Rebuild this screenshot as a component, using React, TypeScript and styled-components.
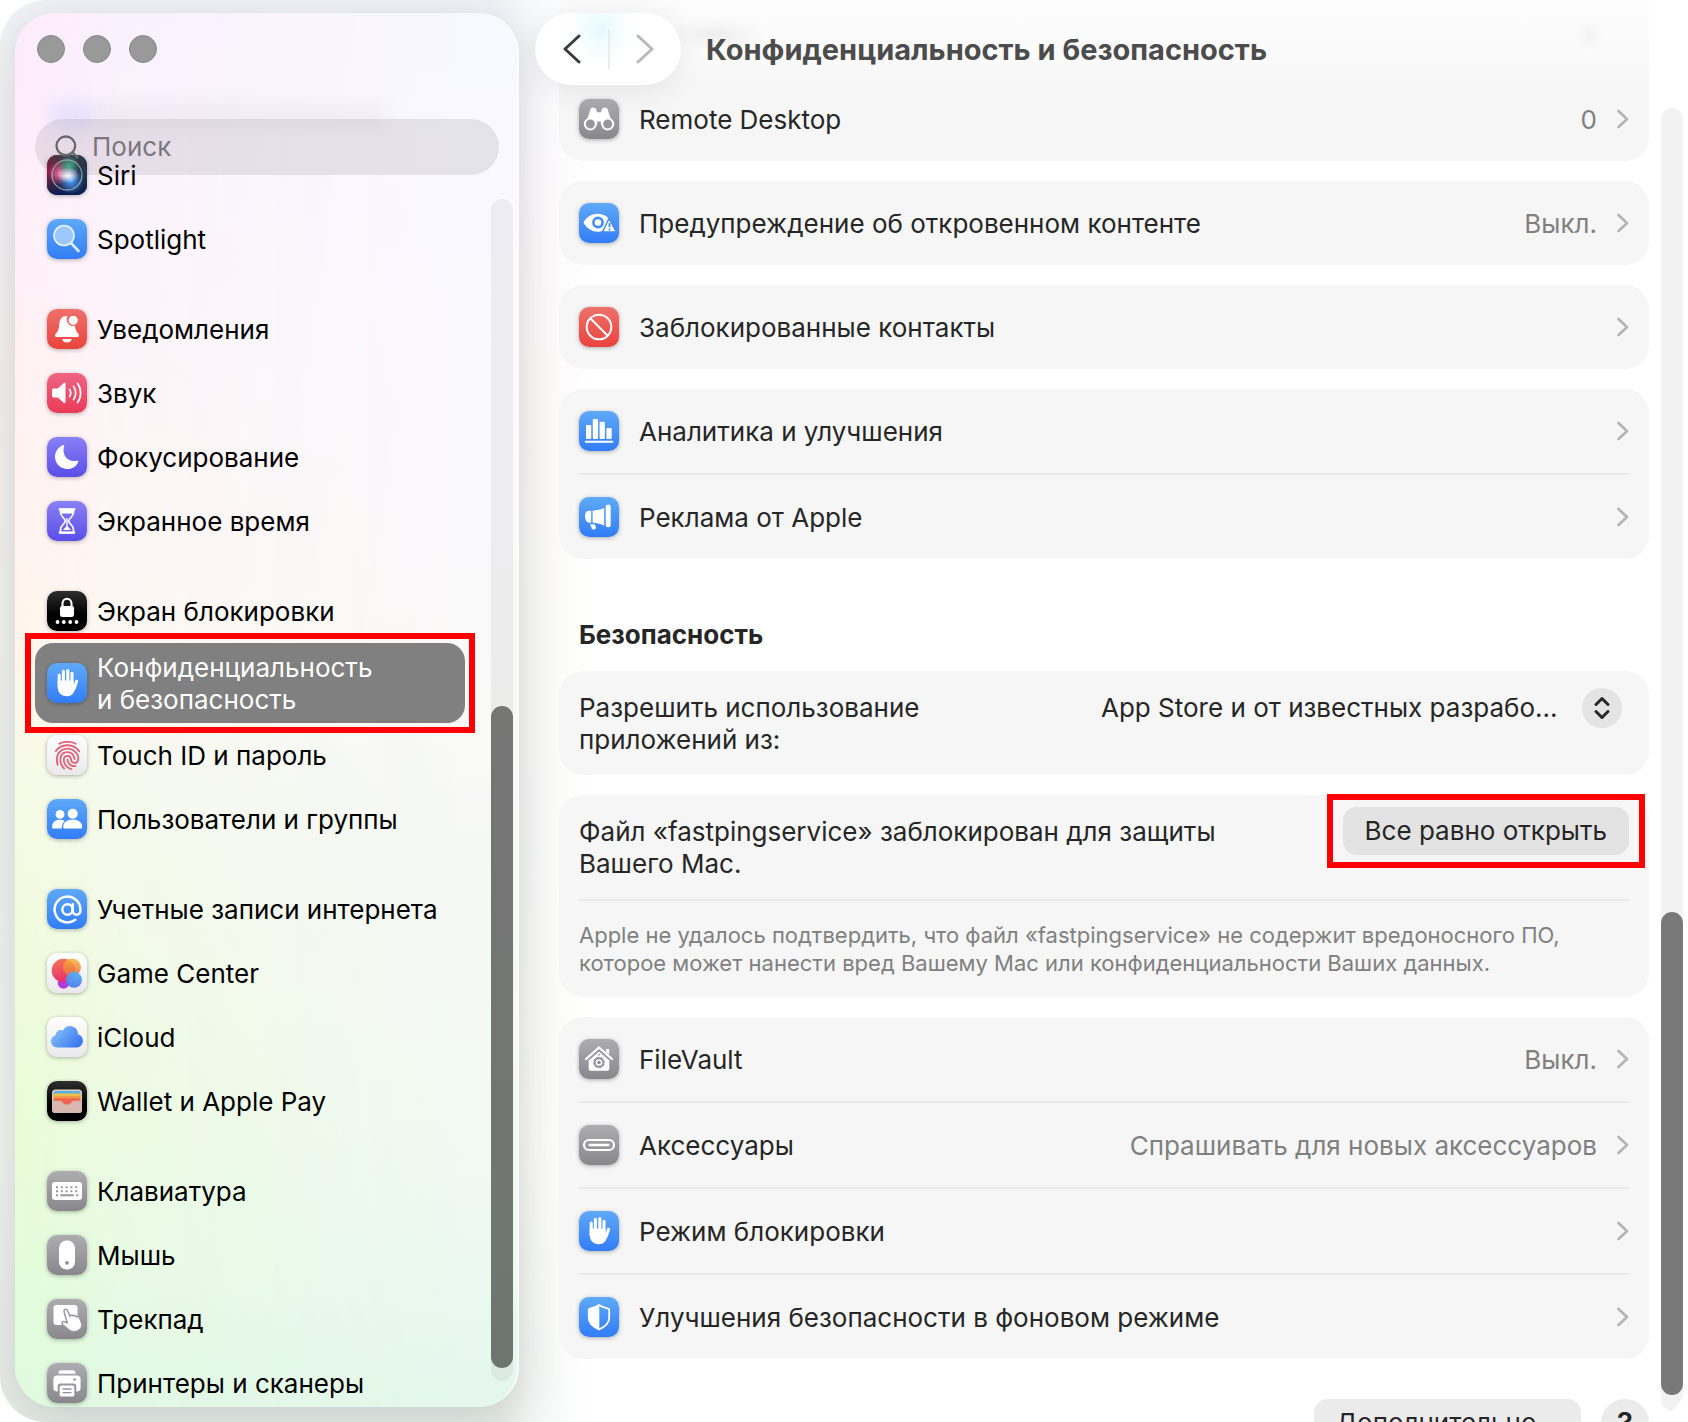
import React from "react";
import styled, { createGlobalStyle, css } from "styled-components";
import { AtSign, Search } from "lucide-react";
import { IoFingerPrint } from "react-icons/io5";

const GlobalStyle = createGlobalStyle`
  *, *::before, *::after { box-sizing: border-box; }
  body {
    margin: 0;
    background: #ffffff;
    color: #262626;
    font-family: Inter, "Noto Sans", "Liberation Sans", sans-serif;
    font-size: 26px;
    line-height: 32px;
    -webkit-font-smoothing: antialiased;
  }
  h1, h2, p, ul { margin: 0; padding: 0; }
  ul { list-style: none; }
  a { color: inherit; text-decoration: none; }
  button, input, select { font: inherit; color: inherit; border: 0; padding: 0; background: none; }
`;

/* ---------- window ---------- */

const Window = styled.div`
  position: relative;
  display: flex;
  height: 100vh;
  overflow: hidden;
  border-radius: 46px;
  background: #ffffff;

  &::before {
    content: "";
    position: absolute;
    inset: 0 auto 0 0;
    width: 590px;
    background: linear-gradient(
      #f2f4f9 0%,
      #f6f2f6 12%,
      #f6f0ef 26%,
      #f3f2ef 40%,
      #f0f2ef 60%,
      #f4f4ef 80%,
      #e6ece8 100%
    );
    mask-image: linear-gradient(to right, #000 0 500px, rgba(0, 0, 0, 0.5) 530px, transparent 590px);
  }
`;

/* ---------- sidebar ---------- */

const Sidebar = styled.aside`
  position: relative;
  flex: 0 0 504px;
  min-width: 0;
  display: flex;
  flex-direction: column;
  margin: 13px 0 15px 15px;
  border-radius: 40px;
  border-right: 2px solid rgba(255, 255, 255, 0.7);
  background: linear-gradient(#f8f8ff 0%, #faf9fe 25%, #faf9f9 45%, #f6f8f6 62%, #f2f9f3 78%, #ecf9f0 90%, #e4f7ec 100%);
  box-shadow: 0 8px 44px rgba(30, 40, 50, 0.17);
  color: #000000;

  &::before {
    content: "";
    position: absolute;
    inset: 0;
    border-radius: inherit;
    background: linear-gradient(#fdeafd 0%, #feeefb 12%, #fff0f3 24%, #fff5ec 44%, #f5fae6 55%, #effbdc 66%, #e8fcd6 80%, #dffadd 100%);
    mask-image: linear-gradient(to right, #000 0%, rgba(0, 0, 0, 0.55) 20%, rgba(0, 0, 0, 0.3) 50%, transparent 90%);
  }
`;

const TrafficLights = styled.div`
  position: relative;
  display: flex;
  gap: 18px;
  padding: 22px 22px 56px;
`;

const Light = styled.button`
  width: 28px;
  height: 28px;
  border-radius: 50%;
  border: 1px solid #868686;
  background: #999999;
`;

const SearchField = styled.label`
  position: relative;
  z-index: 1;
  display: flex;
  align-items: center;
  gap: 11px;
  height: 56px;
  margin: 0 18px 0 20px;
  padding: 0 18px;
  border-radius: 28px;
  background: rgba(60, 55, 65, 0.11);
  color: #6b686d;

  &::before {
    content: "";
    position: absolute;
    left: 14px;
    top: -16px;
    width: 340px;
    height: 24px;
    border-radius: 12px;
    background: linear-gradient(to right, rgba(90, 120, 255, 0.14) 0 36px, rgba(0, 0, 0, 0.04) 50px);
    filter: blur(9px);
  }

  input {
    flex: 1;
    width: 100%;
    min-width: 0;
    outline: none;
  }
  input::placeholder {
    color: #7b787d;
    opacity: 1;
  }
`;

const SidebarBody = styled.div`
  position: relative;
  flex: 1;
  min-height: 0;
  display: flex;
  margin-top: -32px;
`;

const NavList = styled.nav`
  flex: 1;
  min-width: 0;
  padding: 0 26px 0 20px;
`;

const NavGroup = styled.ul`
  & + & {
    margin-top: 26px;
  }
`;

const NavLink = styled.a<{ $selected?: boolean }>`
  position: relative;
  display: flex;
  align-items: center;
  gap: 10px;
  min-height: 64px;
  padding: 7px 12px;
  border-radius: 18px;
  ${(p) =>
    p.$selected &&
    css`
      background: #808080;
      color: #ffffff;
    `}
`;

const NavText = styled.span`
  padding-top: 2px;
  white-space: pre;
`;

const Highlight = styled.span<{ $x: number; $y: number }>`
  position: absolute;
  inset: ${(p) => -p.$y}px ${(p) => -p.$x}px;
  border: 6px solid #ff0000;
  pointer-events: none;
`;

const Track = styled.div<{ $margin: string; $end: number }>`
  flex: 0 0 22px;
  display: flex;
  flex-direction: column;
  justify-content: flex-end;
  margin: ${(p) => p.$margin};
  padding-bottom: ${(p) => p.$end}px;
  border-radius: 11px;
  background: rgba(0, 0, 0, 0.05);
`;

const Thumb = styled.div<{ $size: number }>`
  height: ${(p) => p.$size}%;
  border-radius: 11px;
  background: rgba(0, 0, 0, 0.5);
`;

/* ---------- icon tiles ---------- */

const tones = {
  blue: "linear-gradient(#5fa9f8, #327df7)",
  red: "linear-gradient(#ee716a, #ea433d)",
  pink: "linear-gradient(#ee6583, #ea3b58)",
  purple: "linear-gradient(#8a80f6, #5a4ee8)",
  gray: "linear-gradient(#adadb0, #88888c)",
  black: "linear-gradient(#2e2e2e, #000000 60%)",
  white: "linear-gradient(#ffffff, #e9e9eb)",
};
type Tone = keyof typeof tones;

const Tile = styled.span<{ $tone: Tone }>`
  flex: none;
  width: 40px;
  height: 40px;
  display: grid;
  place-items: center;
  border-radius: 10px;
  overflow: hidden;
  background: ${(p) => tones[p.$tone]};
  box-shadow: 0 1px 4px rgba(0, 0, 0, 0.3);

  svg {
    display: block;
  }
`;

const Glyph = ({ children }: { children: React.ReactNode }) => (
  <svg width="40" height="40" viewBox="0 0 40 40" fill="#fff" aria-hidden="true">
    {children}
  </svg>
);

const HandGlyph = () => (
  <Glyph>
    <g stroke="#fff" strokeWidth="3.1" strokeLinecap="round" fill="none">
      <path d="M12.2 12v12M16.4 8.3V20M20.8 7.6V20M25 10.2V22" />
      <path d="M29.6 18.2 27.4 25" strokeWidth="3" />
    </g>
    <path d="M10.7 17.5h15.8v4.2l2.6-1.5c-.6 7-2.6 13-9 13-6.600 0-9.400-4.200-9.400-9.700z" />
  </Glyph>
);

const glyphs: Record<string, React.ReactNode> = {
  siri: (
    <Glyph>
      <defs>
        <linearGradient id="siriBg" x1="0" y1="0.3" x2="1" y2="0.7">
          <stop offset="0" stopColor="#a01c4c" />
          <stop offset="0.5" stopColor="#3a3358" />
          <stop offset="1" stopColor="#123c50" />
        </linearGradient>
        <linearGradient id="siriBottom" x1="0" y1="0" x2="0" y2="1">
          <stop offset="0" stopColor="#2c4a42" stopOpacity="0.7" />
          <stop offset="0.4" stopColor="#222" stopOpacity="0" />
          <stop offset="1" stopColor="#0b1c58" />
        </linearGradient>
        <radialGradient id="siriPink"><stop offset="0" stopColor="#ff7ab0" /><stop offset="1" stopColor="#ff5a90" stopOpacity="0" /></radialGradient>
        <radialGradient id="siriGreen"><stop offset="0" stopColor="#42c294" /><stop offset="1" stopColor="#42c294" stopOpacity="0" /></radialGradient>
        <radialGradient id="siriBlue"><stop offset="0" stopColor="#4aa8ff" /><stop offset="1" stopColor="#4a90ff" stopOpacity="0" /></radialGradient>
        <radialGradient id="siriCore"><stop offset="0" stopColor="#fff" /><stop offset="0.3" stopColor="#fff" stopOpacity="0.8" /><stop offset="1" stopColor="#fff" stopOpacity="0" /></radialGradient>
      </defs>
      <rect width="40" height="40" fill="url(#siriBg)" />
      <rect width="40" height="40" fill="url(#siriBottom)" />
      <circle cx="13" cy="18" r="12" fill="url(#siriPink)" />
      <circle cx="22" cy="11" r="11" fill="url(#siriGreen)" />
      <circle cx="24" cy="26" r="13" fill="url(#siriBlue)" />
      <ellipse cx="21" cy="20" rx="11" ry="8" fill="url(#siriCore)" />
      <circle cx="20" cy="20" r="15" fill="none" stroke="#b9d8d4" strokeOpacity="0.65" strokeWidth="1.300" />
    </Glyph>
  ),
  spotlight: (
    <Glyph>
      <path d="m24.500 24.500 7 7.500" stroke="#dcecff" strokeWidth="2.600" strokeLinecap="round" />
      <circle cx="17" cy="16.500" r="10" fill="#9cc8fb" stroke="#e6f3ff" strokeWidth="1.600" />
    </Glyph>
  ),
  bell: (
    <Glyph>
      <path d="M20 7c-5 0-7.500 3.500-7.800 8.200-.3 5-1.200 7-3.700 9.800-1 1.200-.6 3 1.100 3h20.800c1.700 0 2.100-1.800 1.100-3-2.500-2.800-3.300-4.800-3.600-8.500A6.600 6.600 0 0 1 20.500 7z" />
      <circle cx="26.200" cy="11.300" r="5.200" stroke="#ec615a" strokeWidth="1.200" />
      <path d="M15.500 30h9a4.500 3.400 0 0 1-9 0z" />
    </Glyph>
  ),
  sound: (
    <Glyph>
      <path d="M5 17.200c0-1 .6-1.700 1.700-1.700h4.100l5.800-5.300c.8-.7 1.900-.2 1.900.8v18c0 1-1.100 1.500-1.900.8l-5.800-5.300H6.700c-1.100 0-1.700-.7-1.700-1.700z" />
      <g fill="none" stroke="#fff" strokeWidth="1.700" strokeLinecap="round">
        <path d="M22.600 16.500c1.300 2 1.300 5 0 7" />
        <path d="M26.600 13.500c2.700 3.600 2.700 9.400 0 13" />
        <path d="M30.600 10.500c4 5.300 4 13.700 0 19" />
      </g>
    </Glyph>
  ),
  moon: (
    <Glyph>
      <path d="M15.800 8.200c.8-.4 1.600.3 1.300 1.100-2.800 8.700 3.900 16.600 13 14.400.9-.2 1.500.6 1.100 1.400-1.900 4.400-6 7-10.600 7C13.600 32.100 8 26.700 8 19.800c0-5 3.100-9.600 7.800-11.600z" />
    </Glyph>
  ),
  hourglass: (
    <Glyph>
      <path d="M13.500 8.300h13v3.200c0 4.200-4.800 5.800-4.800 8.500s4.800 4.300 4.800 8.500v3.200h-13v-3.200c0-4.200 4.800-5.800 4.800-8.500s-4.800-4.300-4.800-8.500z" fill="none" stroke="#fff" strokeWidth="1.700" strokeLinejoin="round" />
      <path d="M11.800 7.200h16.400v2.300H11.800zM11.800 30.500h16.400v2.300H11.800z" />
      <path d="M19.300 17h1.400v8.500c.8 1.200 2.500 2 3.300 3.500h-8c.8-1.500 2.500-2.300 3.300-3.500z" />
      <path d="M13.800 9h12.400v3.600H13.800z" />
    </Glyph>
  ),
  lock: (
    <Glyph>
      <rect x="13" y="15" width="14" height="11" rx="2.200" />
      <path d="M15.500 16v-3.500a4.500 4.800 0 0 1 9 0V16" fill="none" stroke="#fff" strokeWidth="2.100" />
      <circle cx="10.500" cy="31" r="1.900" /><circle cx="16.800" cy="31" r="1.900" />
      <circle cx="23.200" cy="31" r="1.900" /><circle cx="29.500" cy="31" r="1.900" />
    </Glyph>
  ),
  hand: <HandGlyph />,
  touch: <IoFingerPrint size={31} color="#e0637c" />,
  users: (
    <Glyph>
      <circle cx="13" cy="15.300" r="4.400" />
      <path d="M5 28c0-4.600 3.400-7.300 7.900-7.300 1.900 0 3.500.5 4.800 1.300-1.800 1.700-2.900 4-3 7.500H6.300c-.8 0-1.300-.6-1.300-1.500z" />
      <circle cx="25.700" cy="14.700" r="5" />
      <path d="M16.200 28c0-4.700 4.100-7.500 9.500-7.500s9.500 2.800 9.500 7.500c0 .9-.6 1.500-1.500 1.500h-16c-.9 0-1.500-.6-1.500-1.500z" />
    </Glyph>
  ),
  at: <AtSign size={31} color="#fff" strokeWidth={1.900} />,
  game: (
    <Glyph>
      <defs>
        <linearGradient id="gcRed" x1="0" y1="0" x2="0.2" y2="1"><stop offset="0" stopColor="#f07a50" /><stop offset="1" stopColor="#ec2f70" /></linearGradient>
        <linearGradient id="gcOrange" x1="0.300" y1="0" x2="0.300" y2="1"><stop offset="0" stopColor="#f8b234" /><stop offset="1" stopColor="#f06a48" /></linearGradient>
        <linearGradient id="gcBlue" x1="0" y1="0" x2="0" y2="1"><stop offset="0" stopColor="#49b5f5" /><stop offset="1" stopColor="#4575ee" /></linearGradient>
      </defs>
      <circle cx="16.500" cy="30" r="5.800" fill="#b43be0" />
      <circle cx="16.500" cy="17.500" r="11.800" fill="url(#gcRed)" />
      <circle cx="25" cy="14.500" r="9" fill="url(#gcOrange)" fillOpacity="0.850" />
      <circle cx="27" cy="26.800" r="8" fill="url(#gcBlue)" fillOpacity="0.900" />
    </Glyph>
  ),
  cloud: (
    <Glyph>
      <defs>
        <linearGradient id="cloud" x1="0" y1="0" x2="1" y2="0.600"><stop offset="0" stopColor="#8fccf8" /><stop offset="1" stopColor="#3d79ee" /></linearGradient>
      </defs>
      <path d="M10.600 30.500C7 30.500 4 27.800 4 24.300c0-3.100 2-5.400 4.700-6 .1-3.200 2.200-5.300 4.900-5.300.9 0 1.700.2 2.400.6C17.300 10.400 20.100 9 23 9c4.600 0 8 3.600 8 8.200 3 .8 4.900 3.300 4.900 6.500 0 3.900-3 6.800-6.700 6.800z" fill="url(#cloud)" />
    </Glyph>
  ),
  wallet: (
    <Glyph>
      <rect x="5" y="8.500" width="30" height="23.500" rx="3.500" fill="#d9cfca" />
      <rect x="6.500" y="10" width="27" height="8" rx="2" fill="#5ab0e0" />
      <rect x="6.500" y="12.500" width="27" height="8" rx="1.500" fill="#eebf48" />
      <rect x="6.500" y="15" width="27" height="8" rx="1.500" fill="#f29a45" />
      <rect x="6.500" y="17.300" width="27" height="8" rx="1.500" fill="#ee6650" />
      <path d="M5 19.800h7.500c1.700 0 2.300.7 3.200 1.800 2.400 2.900 6.200 2.900 8.600 0 .9-1.100 1.500-1.800 3.200-1.800H35v8.700a3.500 3.500 0 0 1-3.500 3.500h-23A3.500 3.500 0 0 1 5 28.500z" fill="#d8b7ae" />
    </Glyph>
  ),
  keyboard: (
    <Glyph>
      <rect x="5" y="11" width="30" height="18" rx="3" />
      <g stroke="#97979b" strokeWidth="2" strokeDasharray="2 2.800">
        <path d="M9 16.300h22M9 20.300h22" />
        <path d="M9 24.300h2M29.200 24.300h2" />
      </g>
      <path d="M13.300 24.300h13.500" stroke="#97979b" strokeWidth="2" />
    </Glyph>
  ),
  mouse: (
    <Glyph>
      <rect x="12" y="5.500" width="16" height="29" rx="7.500" />
      <circle cx="20" cy="27.800" r="1.900" fill="#8f8f93" />
    </Glyph>
  ),
  trackpad: (
    <Glyph>
      <rect x="6.500" y="6" width="24" height="20" rx="3" />
      <path d="M17 12.500c-.6-2 2.400-3.200 3.300-1.200l2.700 6 .5-.9c1-.8 2.300-.4 2.800.6 1.200-.8 2.600-.4 3.200.8 1.200-.5 2.500 0 3.100 1.200l1.500 3.400c1.700 4 .2 7.800-3.600 9.500-3.200 1.400-6.300.9-9-1.300l-6-5c-1.400-1.300-.1-3.400 1.800-2.900l2.900 1z" stroke="#99999d" strokeWidth="1.500" />
    </Glyph>
  ),
  printer: (
    <Glyph>
      <path d="M11.500 10c0-1.800 1-2.800 2.800-2.800h11.400c1.800 0 2.800 1 2.800 2.800v.8h-17z" />
      <path d="M10 12.500h20c2.300 0 3.600 1.300 3.600 3.600v9c0 2.200-1.200 3.300-3.300 3.300h-1v-5.500c0-1.600-.9-2.500-2.500-2.500H13.200c-1.600 0-2.500.9-2.500 2.500v5.500h-1c-2.100 0-3.300-1.100-3.300-3.300v-9c0-2.300 1.300-3.600 3.600-3.600z" />
      <circle cx="27.500" cy="16.500" r="1.300" fill="#929296" />
      <rect x="12.700" y="22.500" width="14.600" height="11" rx="1.600" />
      <path d="M15.500 26h9M15.500 29.600h9" stroke="#929296" strokeWidth="1.400" />
    </Glyph>
  ),
  binoculars: (
    <Glyph>
      <path d="M11 11.500c.3-1.700 1.200-3 3-3s3.200 1 3.500 2.800l.4 1.900h4.200l.4-1.900c.3-1.800 1.700-2.800 3.500-2.800s2.700 1.300 3 3l4.500 13.700H21.800v-2.700h-3.600v2.700H6.500z" />
      <g fill="#97979a" stroke="#fff" strokeWidth="2">
        <circle cx="11.300" cy="25" r="5.500" /><circle cx="28.700" cy="25" r="5.500" />
      </g>
    </Glyph>
  ),
  eye: (
    <Glyph>
      <path d="M4.500 19.500C6.500 15 12 10.700 18.700 10.700c5 0 9 2.300 11.800 5.600l-5.700 11.200c-1.900.9-4 1.300-6.100 1.300-6.700 0-12.200-4.800-14.200-9.300z" />
      <circle cx="19" cy="19.500" r="4.600" fill="none" stroke="#428cf7" strokeWidth="2.600" />
      <path d="M30 15.500 37.300 29H23.500z" stroke="#428cf7" strokeWidth="1.500" strokeLinejoin="round" />
      <path d="M30.500 20v4.200M30.500 25.600v1.800" stroke="#3a84f7" strokeWidth="1.700" />
    </Glyph>
  ),
  ban: (
    <Glyph>
      <g fill="none" stroke="#fff" strokeWidth="2">
        <circle cx="20" cy="20" r="12.300" /><path d="m11.300 11.300 17.400 17.400" />
      </g>
    </Glyph>
  ),
  chart: (
    <Glyph>
      <rect x="7" y="14" width="5.300" height="14" rx="1" />
      <rect x="13.800" y="8" width="5.300" height="20" rx="1" />
      <rect x="20.600" y="10.800" width="5.300" height="17.200" rx="1" />
      <rect x="27.400" y="17" width="5.300" height="11" rx="1" />
      <rect x="6" y="29.700" width="28" height="2" rx="0.500" />
    </Glyph>
  ),
  megaphone: (
    <Glyph>
      <path d="M6 19c0-3.500 1.500-5.300 4.500-5.300h1.700v12h-1.700C7.500 25.700 6 22.500 6 19z" />
      <path d="M13.600 13.700c4.500-.2 8.300-1 11.600-2.600v17.600c-3.300-1.700-7.100-2.700-11.600-3z" />
      <rect x="26.700" y="7.500" width="5" height="22.800" rx="2.500" />
      <path d="M11 27.300c1.600-.2 3.400 0 5 .3l.8 2.600c.6 2.200-3 3.300-4 1.300z" />
    </Glyph>
  ),
  vault: (
    <Glyph>
      <path d="M7 20 20 8.500 33 20" fill="none" stroke="#fff" strokeWidth="2.300" strokeLinecap="round" strokeLinejoin="round" />
      <path d="M27 10h3.200v5.500L27 13z" />
      <path d="M20 12.500 30.300 21v8.500c0 1.500-.8 2.300-2.300 2.300H12c-1.500 0-2.300-.8-2.300-2.300V21z" />
      <circle cx="20" cy="23.500" r="4.500" fill="#fff" stroke="#8f8f92" strokeWidth="2.400" />
      <circle cx="20" cy="23.500" r="5" fill="none" stroke="#fff" strokeWidth="0.900" strokeDasharray="1 2.900" />
      <circle cx="20" cy="23.500" r="1.800" fill="#8f8f92" />
      <circle cx="20" cy="15.600" r="0.900" fill="#8f8f92" />
      <path d="M10 20.500 20 11.500l10 9" fill="none" stroke="#9b9b9e" strokeWidth="1.200" />
    </Glyph>
  ),
  port: (
    <Glyph>
      <rect x="5" y="15" width="30" height="10" rx="5" fill="none" stroke="#fff" strokeWidth="2.200" />
      <rect x="9.500" y="18.700" width="21" height="2.600" rx="1.300" />
    </Glyph>
  ),
  shield: (
    <Glyph>
      <path d="M20 8c3 2 6 3 9.200 3.600.7.100 1 .5 1 1.200v8c0 5.700-4.600 9.200-10.200 11.700-5.600-2.500-10.200-6-10.200-11.700v-8c0-.7.3-1.100 1-1.200C14 11 17 10 20 8z" fill="none" stroke="#fff" strokeWidth="1.800" strokeLinejoin="round" />
      <path d="M20.300 8c-3 2-6.300 3-9.500 3.600-.7.100-1 .5-1 1.200v8c0 5.700 4.900 9.200 10.500 11.700z" />
    </Glyph>
  ),
};

const Icon = ({ name, tone }: { name: string; tone: Tone }) => <Tile $tone={tone}>{glyphs[name]}</Tile>;

/* ---------- main pane ---------- */

const Main = styled.main`
  position: relative;
  flex: 1;
  min-width: 0;
  display: flex;
  flex-direction: column;
`;

const Toolbar = styled.header`
  position: relative;
  z-index: 1;
  display: flex;
  align-items: center;
  gap: 25px;
  padding: 13px 0 0 16px;
  background:
    radial-gradient(50px 16px at 196px 34px, rgba(0, 0, 0, 0.05), transparent) no-repeat,
    radial-gradient(14px 16px at calc(100% - 99px) 36px, rgba(0, 0, 0, 0.03), transparent) no-repeat,
    linear-gradient(#fcfcfc, #fafafa 70%, #f6f6f6) 40px 0 / calc(100% - 79px) 100% no-repeat;
`;

const History = styled.div`
  display: flex;
  align-items: center;
  height: 72px;
  width: 146px;
  border-radius: 36px;
  background: radial-gradient(circle at 66px 16px, #e6faff 0, rgba(230, 250, 255, 0) 34px) #ffffff;
  box-shadow: 0 4px 30px rgba(0, 0, 0, 0.08);
`;

const HistoryButton = styled.button<{ $dim?: boolean }>`
  flex: 1;
  height: 72px;
  display: grid;
  place-items: center;
  color: ${(p) => (p.$dim ? "#b9b9b9" : "#3c3c3c")};

  & + & {
    background: linear-gradient(#ececec, #ececec) 0 50% / 2px 40px no-repeat;
  }
`;

const Title = styled.h1`
  padding-top: 2px;
  font-size: 29px;
  line-height: 40px;
  font-weight: 700;
  color: #4c4c4c;
`;

const Scroller = styled.div`
  flex: 1;
  min-height: 0;
  display: flex;
  gap: 12px;
  margin-top: -8px;
  padding: 0 5px 0 40px;
`;

const Content = styled.div`
  flex: 1;
  min-width: 0;
  display: flex;
  flex-direction: column;
  gap: 20px;
`;

const Card = styled.section<{ $continued?: boolean }>`
  flex: none;
  padding: 0 20px;
  border-radius: ${(p) => (p.$continued ? "0 0 24px 24px" : "24px")};
  background: #f6f6f6;

  & > * + * {
    border-top: 2px solid #eaeaea;
  }
`;

const Row = styled.a`
  display: flex;
  align-items: center;
  height: 84px;
  gap: 20px;

  & + & {
    height: 86px;
  }
`;

const RowLabel = styled.span`
  flex: 1;
  padding-top: 2px;
`;

const RowValue = styled.span`
  padding-top: 2px;
  color: #808080;
`;

const SectionTitle = styled.h2`
  margin: 40px 20px 0;
  font-size: 26px;
  line-height: 32px;
  font-weight: 700;
  color: #262626;
`;

const FieldRow = styled.div`
  display: flex;
  align-items: flex-start;
  justify-content: space-between;
  gap: 20px;
  padding: 12px 0;
`;

const FieldText = styled.span`
  max-width: 680px;
  padding: 9px 0 7px;
`;

const FieldLabel = styled.label`
  max-width: 400px;
  padding: 9px 0 7px;
`;

const PopUp = styled.div`
  display: grid;
  align-items: center;
  margin-right: 7px;
  padding-top: 5px;

  & > * {
    grid-area: 1 / 1;
  }
`;

const PopUpSelect = styled.select`
  appearance: none;
  height: 40px;
  padding-right: 64px;
  outline: none;
`;

const PopUpKnob = styled.span`
  justify-self: end;
  display: grid;
  place-items: center;
  width: 40px;
  height: 40px;
  border-radius: 50%;
  background: #e4e4e4;
  pointer-events: none;
`;

const Button = styled.button<{ $light?: boolean }>`
  position: relative;
  flex: none;
  height: 48px;
  padding: 0 22px;
  border-radius: 14px;
  background: ${(p) => (p.$light ? "#ebebeb" : "#e3e3e3")};
  white-space: nowrap;
`;

const Note = styled.p`
  padding: 20px 0;
  font-size: 22px;
  line-height: 28px;
  color: #808080;
`;

const Footer = styled.footer`
  display: flex;
  justify-content: flex-end;
  gap: 20px;
  margin-top: 20px;
`;

const HelpButton = styled.button`
  flex: none;
  width: 48px;
  height: 48px;
  border-radius: 50%;
  background: #ebebeb;
  font-size: 29px;
  font-weight: 600;
`;

const Disclosure = () => (
  <svg width="12" height="20" viewBox="0 0 12 20" fill="none" stroke="#b4b4b4" strokeWidth="2.600" strokeLinecap="round" strokeLinejoin="round" aria-hidden="true">
    <path d="m1.500 2 8.500 8-8.500 8" />
  </svg>
);

type NavEntry = { icon: string; tone: Tone; text: string; selected?: boolean };

const navGroups: NavEntry[][] = [
  [
    { icon: "siri", tone: "black", text: "Siri" },
    { icon: "spotlight", tone: "blue", text: "Spotlight" },
  ],
  [
    { icon: "bell", tone: "red", text: "Уведомления" },
    { icon: "sound", tone: "pink", text: "Звук" },
    { icon: "moon", tone: "purple", text: "Фокусирование" },
    { icon: "hourglass", tone: "purple", text: "Экранное время" },
  ],
  [
    { icon: "lock", tone: "black", text: "Экран блокировки" },
    { icon: "hand", tone: "blue", text: "Конфиденциальность\nи безопасность", selected: true },
    { icon: "touch", tone: "white", text: "Touch ID и пароль" },
    { icon: "users", tone: "blue", text: "Пользователи и группы" },
  ],
  [
    { icon: "at", tone: "blue", text: "Учетные записи интернета" },
    { icon: "game", tone: "white", text: "Game Center" },
    { icon: "cloud", tone: "white", text: "iCloud" },
    { icon: "wallet", tone: "black", text: "Wallet и Apple Pay" },
  ],
  [
    { icon: "keyboard", tone: "gray", text: "Клавиатура" },
    { icon: "mouse", tone: "gray", text: "Мышь" },
    { icon: "trackpad", tone: "gray", text: "Трекпад" },
    { icon: "printer", tone: "gray", text: "Принтеры и сканеры" },
  ],
];

const SettingRow = ({ icon, tone, label, value }: { icon: string; tone: Tone; label: string; value?: string }) => (
  <Row href="#">
    <Icon name={icon} tone={tone} />
    <RowLabel>{label}</RowLabel>
    {value && <RowValue>{value}</RowValue>}
    <Disclosure />
  </Row>
);

export default function App() {
  return (
    <>
      <GlobalStyle />
      <Window>
        <Sidebar>
          <TrafficLights>
            <Light aria-label="Закрыть" />
            <Light aria-label="Свернуть" />
            <Light aria-label="Развернуть" />
          </TrafficLights>
          <SearchField>
            <Search size={28} strokeWidth={2} aria-hidden="true" />
            <input type="search" placeholder="Поиск" aria-label="Поиск" />
          </SearchField>
          <SidebarBody>
            <NavList>
              {navGroups.map((group, i) => (
                <NavGroup key={i}>
                  {group.map((item) => (
                    <li key={item.text}>
                      <NavLink href="#" $selected={item.selected} aria-current={item.selected ? "page" : undefined}>
                        <Icon name={item.icon} tone={item.tone} />
                        <NavText>{item.text}</NavText>
                        {item.selected && <Highlight $x={10} $y={10} />}
                      </NavLink>
                    </li>
                  ))}
                </NavGroup>
              ))}
            </NavList>
            <Track $margin="56px 4px 26px 0" $end={13}>
              <Thumb $size={56.6} />
            </Track>
          </SidebarBody>
        </Sidebar>

        <Main>
          <Toolbar>
            <History>
              <HistoryButton aria-label="Назад">
                <svg width="20" height="30" viewBox="0 0 20 30" fill="none" stroke="currentColor" strokeWidth="3" strokeLinecap="round" strokeLinejoin="round">
                  <path d="M17 2 3 15l14 13" />
                </svg>
              </HistoryButton>
              <HistoryButton aria-label="Вперед" $dim>
                <svg width="20" height="30" viewBox="0 0 20 30" fill="none" stroke="currentColor" strokeWidth="3" strokeLinecap="round" strokeLinejoin="round">
                  <path d="m3 2 14 13L3 28" />
                </svg>
              </HistoryButton>
            </History>
            <Title>Конфиденциальность и безопасность</Title>
          </Toolbar>

          <Scroller>
            <Content>
              <Card $continued>
                <SettingRow icon="binoculars" tone="gray" label="Remote Desktop" value="0" />
              </Card>
              <Card>
                <SettingRow icon="eye" tone="blue" label="Предупреждение об откровенном контенте" value="Выкл." />
              </Card>
              <Card>
                <SettingRow icon="ban" tone="red" label="Заблокированные контакты" />
              </Card>
              <Card>
                <SettingRow icon="chart" tone="blue" label="Аналитика и улучшения" />
                <SettingRow icon="megaphone" tone="blue" label="Реклама от Apple" />
              </Card>

              <SectionTitle>Безопасность</SectionTitle>
              <Card>
                <FieldRow>
                  <FieldLabel htmlFor="source">Разрешить использование приложений из:</FieldLabel>
                  <PopUp>
                    <PopUpSelect id="source" defaultValue="known">
                      <option value="known">App Store и от известных разрабо...</option>
                      <option value="store">App Store</option>
                    </PopUpSelect>
                    <PopUpKnob>
                      <svg width="18" height="24" viewBox="0 0 18 24" fill="none" stroke="#262626" strokeWidth="3" strokeLinecap="round" strokeLinejoin="round" aria-hidden="true">
                        <path d="m3 8.500 6-6 6 6M3 15.500l6 6 6-6" />
                      </svg>
                    </PopUpKnob>
                  </PopUp>
                </FieldRow>
              </Card>
              <Card>
                <FieldRow>
                  <FieldText>Файл «fastpingservice» заблокирован для защиты Вашего Mac.</FieldText>
                  <Button>
                    Все равно открыть
                    <Highlight $x={16} $y={13} />
                  </Button>
                </FieldRow>
                <Note>
                  Apple не удалось подтвердить, что файл «fastpingservice» не содержит вредоносного ПО, которое может
                  нанести вред Вашему Mac или конфиденциальности Ваших данных.
                </Note>
              </Card>
              <Card>
                <SettingRow icon="vault" tone="gray" label="FileVault" value="Выкл." />
                <SettingRow icon="port" tone="gray" label="Аксессуары" value="Спрашивать для новых аксессуаров" />
                <SettingRow icon="hand" tone="blue" label="Режим блокировки" />
                <SettingRow icon="shield" tone="blue" label="Улучшения безопасности в фоновом режиме" />
              </Card>

              <Footer>
                <Button $light>Дополнительно...</Button>
                <HelpButton aria-label="Справка">?</HelpButton>
              </Footer>
            </Content>
            <Track $margin="31px 0 11px" $end={16}>
              <Thumb $size={37.5} />
            </Track>
          </Scroller>
        </Main>
      </Window>
    </>
  );
}
